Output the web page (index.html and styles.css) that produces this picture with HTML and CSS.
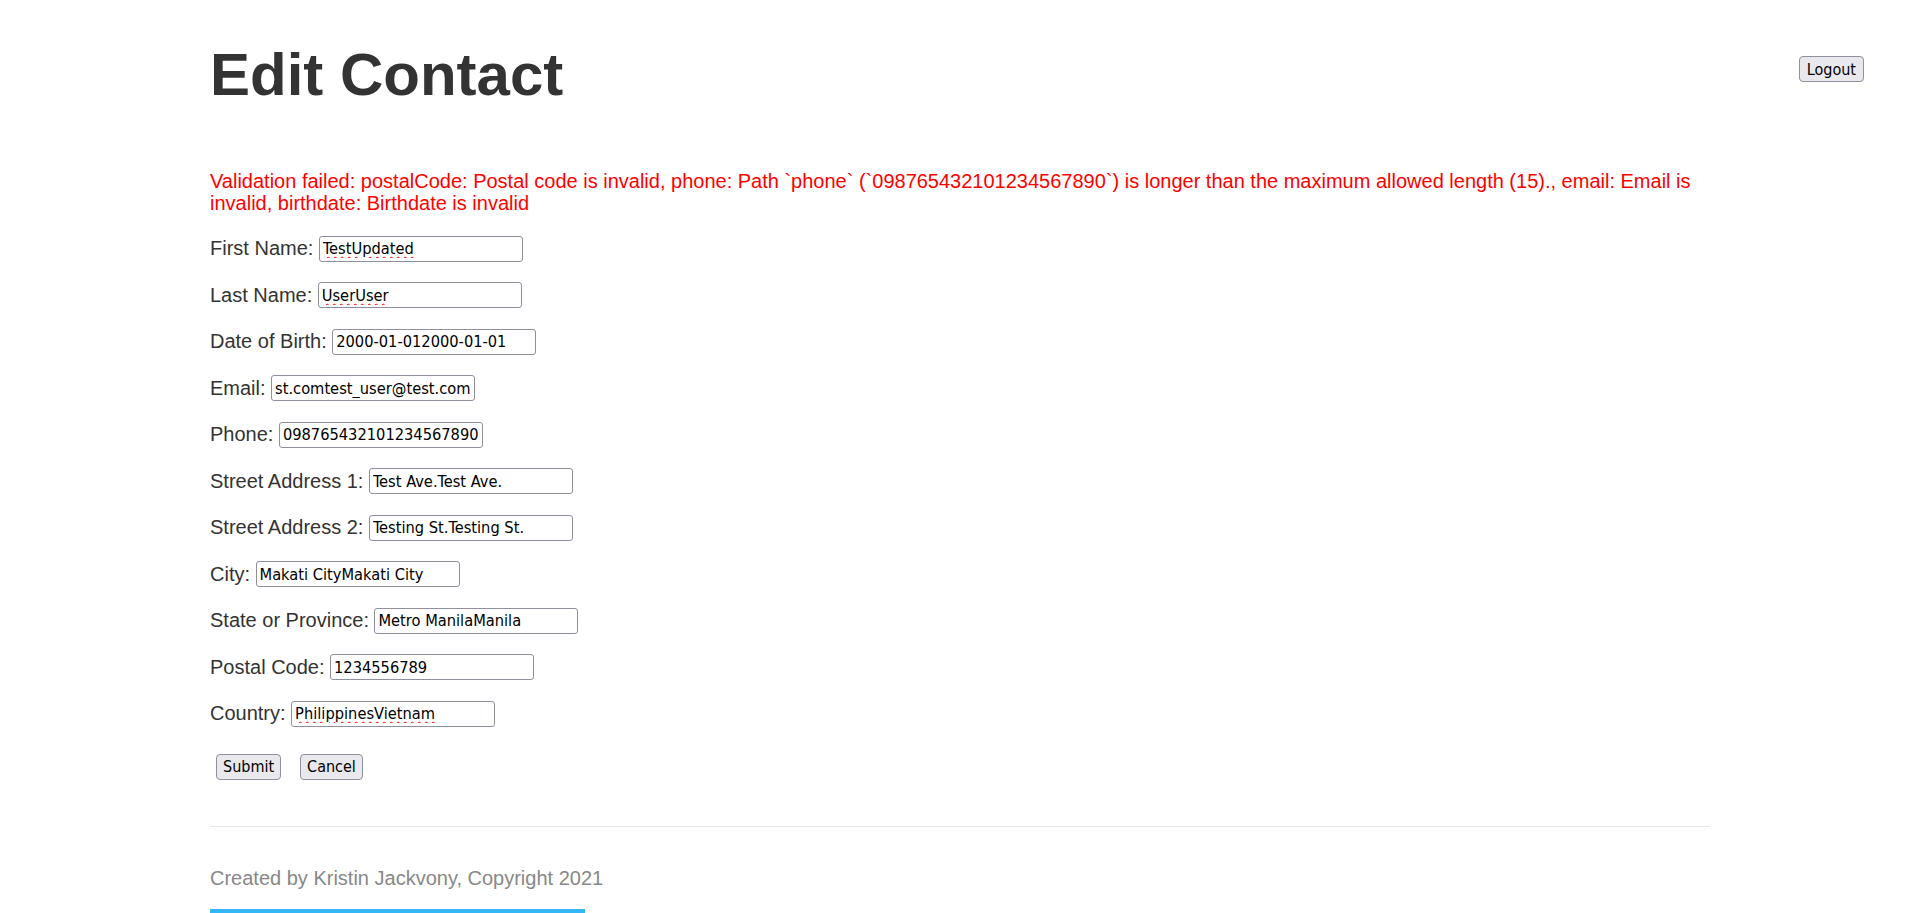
FILE: index.html
```html
<!DOCTYPE html>
<html lang="en">
<head>
<meta charset="utf-8">
<title>Edit Contact</title>
<link rel="stylesheet" href="styles.css">
</head>
<body>
<header class="topbar">
  <h1 class="title">Edit Contact</h1>
  <button class="btn logout" type="button">Logout</button>
</header>
<main class="page">
  <p class="error">Validation failed: postalCode: Postal code is invalid, phone: Path `phone` (`098765432101234567890`) is longer than the maximum allowed length (15)., email: Email is invalid, birthdate: Birthdate is invalid</p>
  <form class="form">
    <div class="row"><label for="f1">First Name:</label><input id="f1" class="field misspelled" type="text" value="TestUpdated"></div>
    <div class="row"><label for="f2">Last Name:</label><input id="f2" class="field misspelled" type="text" value="UserUser"></div>
    <div class="row"><label for="f3">Date of Birth:</label><input id="f3" class="field" type="text" value="2000-01-012000-01-01"></div>
    <div class="row"><label for="f4">Email:</label><input id="f4" class="field" type="text" value="st.comtest_user@test.com"></div>
    <div class="row"><label for="f5">Phone:</label><input id="f5" class="field" type="text" value="098765432101234567890"></div>
    <div class="row"><label for="f6">Street Address 1:</label><input id="f6" class="field" type="text" value="Test Ave.Test Ave."></div>
    <div class="row"><label for="f7">Street Address 2:</label><input id="f7" class="field" type="text" value="Testing St.Testing St."></div>
    <div class="row"><label for="f8">City:</label><input id="f8" class="field" type="text" value="Makati CityMakati City"></div>
    <div class="row"><label for="f9">State or Province:</label><input id="f9" class="field" type="text" value="Metro ManilaManila"></div>
    <div class="row"><label for="f10">Postal Code:</label><input id="f10" class="field" type="text" value="1234556789"></div>
    <div class="row"><label for="f11">Country:</label><input id="f11" class="field misspelled" type="text" value="PhilippinesVietnam"></div>
    <div class="actions">
      <button class="btn" type="button">Submit</button>
      <button class="btn" type="button">Cancel</button>
    </div>
  </form>
  <hr class="rule">
  <p class="credit">Created by Kristin Jackvony, Copyright 2021</p>
  <div class="accent"></div>
</main>
</body>
</html>
```

FILE: styles.css
```css
body {
  margin: 0;
  font-family: "Liberation Sans", Arial, sans-serif;
  color: #333;
  background: #fff;
}

.topbar {
  display: grid;
  grid-template-columns: 1fr minmax(0, 1500px) 1fr;
  padding-top: 40px;
}

.title {
  grid-column: 2;
  margin: 0;
  font-size: 60px;
  line-height: 69px;
  font-weight: bold;
  color: #333;
}

.btn {
  font-family: "DejaVu Sans Condensed", "DejaVu Sans", sans-serif;
  font-stretch: condensed;
  font-size: 16px;
  height: 26px;
  padding: 0 6px;
  background: #e9e9ed;
  border: 1px solid #8f8f9d;
  border-radius: 4px;
  color: #000;
}

.logout {
  grid-column: 3;
  justify-self: end;
  align-self: start;
  padding: 0 7px;
  margin: 16px 56px 0 0;
}

.page {
  width: 1500px;
  margin: 0 auto;
}

.error {
  color: #ff0000;
  font-size: 20px;
  line-height: 22px;
  margin: 61px 0 0;
}

.form {
  display: flex;
  flex-direction: column;
  gap: 20.5px;
  margin-top: 21.5px;
}

.row {
  display: flex;
  align-items: center;
  gap: 5.5px;
  height: 26px;
  font-size: 20px;
  color: #333;
}

.field {
  box-sizing: border-box;
  width: 204px;
  height: 26px;
  padding: 0 3px;
  border: 1px solid #8f8f9d;
  border-radius: 3px;
  font-family: "DejaVu Sans Condensed", "DejaVu Sans", sans-serif;
  font-stretch: condensed;
  font-size: 16.3px;
  color: #000;
  background: #fff;
}

.misspelled {
  text-decoration: underline wavy #e00;
  text-decoration-thickness: 1px;
  text-underline-offset: 2px;
}

.actions {
  display: flex;
  gap: 19px;
  padding-left: 6px;
  margin-top: 6.5px;
}

.rule {
  border: 0;
  border-top: 1px solid #e8e8e8;
  margin: 46px 0 0;
}

.credit {
  color: #888;
  font-size: 20px;
  margin: 40px 0 0;
}

.accent {
  width: 375px;
  height: 5px;
  background: #35b6f6;
  margin-top: 19.5px;
}
```
